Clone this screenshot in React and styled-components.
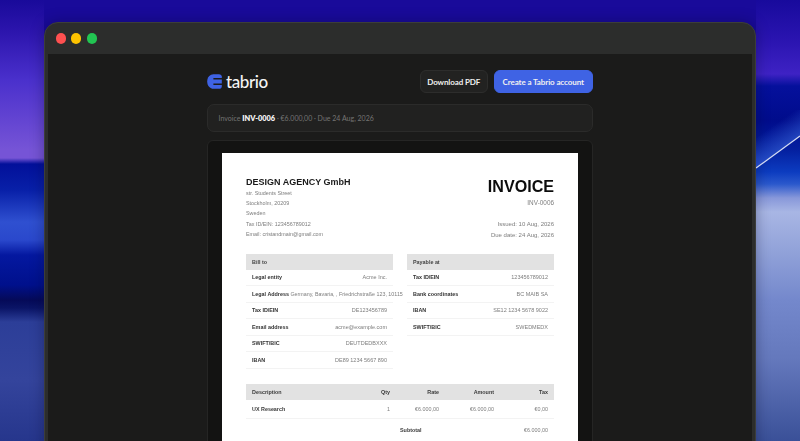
import styled, { createGlobalStyle } from 'styled-components';

const GlobalStyle = createGlobalStyle`
  html, body {
    margin: 0;
    padding: 0;
    background: #1a0a9c;
  }
  * {
    box-sizing: border-box;
  }
`;

/**
 * Wallpaper behind the window. Two strips of stacked colour bands, left and right.
 */
const Page = styled.div`
  position: relative;
  width: 800px;
  height: 441px;
  padding: 22px 44px 0;
  overflow: hidden;
  background:
    linear-gradient(
        180deg,
        #190a9a 0,
        #2b14ac 30px,
        #4a30cc 80px,
        #7654d6 150px,
        #7654d6 158px,
        #02109a 164px,
        #0820a8 190px,
        #2f50d0 222px,
        #2a48cc 240px,
        #0418a0 255px,
        #00108c 285px,
        #050a58 300px,
        #0a1466 308px,
        #2c3e98 322px,
        #34449c 380px,
        #26368c 441px
      )
      left top / 44px 100% no-repeat,
    linear-gradient(
        180deg,
        #180a9c 0,
        #2a14b0 40px,
        #3e22c4 74px,
        #05109c 86px,
        #000c8c 120px,
        #0420a0 150px,
        #0c3cc0 172px,
        #2a58cc 184px,
        #8898da 198px,
        #a8b6e4 212px,
        #98a8dc 240px,
        #7488cc 300px,
        #6478bc 360px,
        #3a5098 441px
      )
      right top / 44px 100% no-repeat,
    #190a9a;
`;

const Streak = styled.svg`
  position: absolute;
  right: 0;
  top: 110px;
`;

const Window = styled.div`
  display: flex;
  flex-direction: column;
  height: 440px;
  background: #2c2d2c;
  border: 1px solid #3c3d3a;
  border-radius: 14px 14px 0 0;
  box-shadow: 0 0 14px rgba(10, 10, 40, 0.35);
`;

const TitleBar = styled.div`
  display: flex;
  align-items: center;
  flex: none;
  gap: 5.3px;
  height: 31px;
  padding-left: 10.5px;
`;

const Dot = styled.span`
  width: 10.3px;
  height: 10.3px;
  border-radius: 50%;
  background: ${({ color }) => color};
`;

const Viewport = styled.div`
  flex: 1;
  margin: 0 3px;
  padding-top: 16px;
  background: #1b1b1a;
  display: flex;
  flex-direction: column;
  align-items: center;
  overflow: hidden;
`;

const Column = styled.div`
  width: 386px;
  flex: none;
`;

const Header = styled.header`
  display: flex;
  align-items: center;
  justify-content: space-between;
  height: 23px;
`;

const Brand = styled.div`
  display: flex;
  align-items: center;
  gap: 4px;
  color: #f4f4f4;
  font-family: 'Lato', sans-serif;
  font-size: 17px;
  font-weight: 500;
  letter-spacing: -0.4px;
  line-height: 1;
`;

const Actions = styled.div`
  display: flex;
  gap: 6px;
  padding-right: 0.5px;
`;

const Button = styled.button`
  height: 23px;
  padding: 0;
  width: ${({ primary }) => (primary ? '98.5px' : '68.5px')};
  border: 1px solid ${({ primary }) => (primary ? '#3f63e4' : '#2d2d2c')};
  border-radius: 6px;
  background: ${({ primary }) => (primary ? '#3f63e4' : '#222221')};
  color: #f0f0f0;
  font-family: 'Lato', sans-serif;
  font-size: 8px;
  font-weight: 700;
  letter-spacing: -0.1px;
`;

const Notice = styled.div`
  display: flex;
  align-items: center;
  height: 28px;
  margin-top: 11px;
  padding-left: 10.5px;
  border: 1px solid #2b2b2a;
  border-radius: 7px;
  background: #212120;
  color: #747473;
  font-family: 'Lato', sans-serif;
  font-size: 7px;
  white-space: pre;
  strong {
    color: #f2f2f2;
    font-size: 7.4px;
    font-weight: 800;
  }
`;

const PaperTray = styled.div`
  margin-top: 8px;
  padding: 12px 14px 0;
  border: 1px solid #252524;
  border-radius: 6px 6px 0 0;
  background: #131312;
  height: 320px;
`;

const Paper = styled.article`
  height: 320px;
  padding: 24px 24px 0;
  background: #fff;
  color: #1a1a1a;
  font-family: 'Liberation Sans', Arial, sans-serif;
  font-size: 5.4px;
`;

const Top = styled.section`
  display: flex;
  justify-content: space-between;
  height: 77px;
  filter: blur(0.25px);
`;

const Company = styled.h2`
  margin: 0;
  font-size: 9px;
  line-height: 11px;
  font-weight: 700;
  color: #1a1a1a;
`;

const Meta = styled.div`
  color: #7d7d7d;
  line-height: 10.2px;
`;

const TitleBlock = styled.div`
  text-align: right;
`;

const Title = styled.h1`
  margin: 0 0 3px;
  font-size: 16.1px;
  line-height: 18px;
  font-weight: 700;
  color: #0c0c0c;
`;

const InvoiceNumber = styled(Meta)`
  font-size: 6.4px;
`;

const Dates = styled(Meta)`
  margin-top: 11px;
  font-size: 6px;
  line-height: 11px;
`;

const Parties = styled.section`
  display: grid;
  grid-template-columns: 147px 147px;
  gap: 14px;
  height: 130px;
  filter: blur(0.25px);
`;

const BandHead = styled.div`
  display: flex;
  align-items: center;
  height: 15.5px;
  padding: 0 6px;
  background: #e2e2e2;
  color: #444;
  font-weight: 700;
`;

const Row = styled.div`
  display: flex;
  align-items: center;
  justify-content: space-between;
  height: 16.5px;
  padding: 0 6px;
  border-bottom: 1px solid #f3f3f3;
  white-space: nowrap;
  b {
    color: #333;
  }
  span {
    color: #7d7d7d;
    font-size: 5.5px;
  }
`;

const LongRow = styled(Row)`
  justify-content: flex-start;
  gap: 1.5px;
  span {
    font-size: 5.35px;
  }
`;

const Items = styled.section`
  filter: blur(0.25px);
`;

const ItemGrid = styled.div`
  display: grid;
  grid-template-columns: 118px 20px 49px 55px 54px;
  align-items: center;
  height: ${({ head }) => (head ? '16px' : '19px')};
  padding: 0 6px;
  background: ${({ head }) => (head ? '#e2e2e2' : 'transparent')};
  border-bottom: ${({ head }) => (head ? 'none' : '1px solid #f3f3f3')};
`;

const Cell = styled.div`
  text-align: ${({ left }) => (left ? 'left' : 'right')};
  font-weight: ${({ bold }) => (bold ? 700 : 400)};
  color: ${({ bold }) => (bold ? '#3a3a3a' : '#7d7d7d')};
`;

const Summary = styled.div`
  display: flex;
  align-items: center;
  justify-content: space-between;
  height: 21px;
  padding: 0 6px 0 154px;
`;

function LogoMark() {
  return (
    <svg width="15" height="15" viewBox="0 0 15 15">
      <path
        fill="#3f63e4"
        d="M6.5 0.2H12C13.6 0.2 14.8 1.2 14.8 2.6V12.4C14.8 13.8 13.6 14.8 12 14.8H6.5C3 14.8 0.2 11.8 0.2 7.5C0.2 3.2 3 0.2 6.5 0.2Z"
      />
      <rect x="6.4" y="4" width="8.6" height="1.5" fill="#1b1b1a" />
      <rect x="6.4" y="9.5" width="8.6" height="1.5" fill="#1b1b1a" />
    </svg>
  );
}

const billTo = [
  ['Tax ID/EIN', 'DE123456789'],
  ['Email address', 'acme@example.com'],
  ['SWIFT/BIC', 'DEUTDEDBXXX'],
  ['IBAN', 'DE89 1234 5667 890'],
];

const payableAt = [
  ['Tax ID/EIN', '123456789012'],
  ['Bank coordinates', 'BC MAIB SA'],
  ['IBAN', 'SE12 1234 5678 9022'],
  ['SWIFT/BIC', 'SWEDMEDX'],
];

export default function App() {
  return (
    <Page>
      <GlobalStyle />
      <Streak width="44" height="62" viewBox="0 0 44 62">
        <defs>
          <linearGradient
            id="streakGlow"
            gradientUnits="userSpaceOnUse"
            x1="8"
            y1="22"
            x2="22"
            y2="42"
          >
            <stop offset="0" stopColor="#2a50c8" stopOpacity="0" />
            <stop offset="1" stopColor="#2a50c8" stopOpacity="0.8" />
          </linearGradient>
        </defs>
        <path d="M0 58L44 26V0H0Z" fill="url(#streakGlow)" />
        <path d="M0 58L44 26" stroke="#d6ddf2" strokeWidth="1.2" fill="none" />
      </Streak>
      <Window>
        <TitleBar>
          <Dot color="#fe5050" />
          <Dot color="#fdc300" />
          <Dot color="#22c552" />
        </TitleBar>
        <Viewport>
          <Column>
            <Header>
              <Brand>
                <LogoMark />
                tabrio
              </Brand>
              <Actions>
                <Button>Download PDF</Button>
                <Button primary>Create a Tabrio account</Button>
              </Actions>
            </Header>
            <Notice>
              Invoice <strong>INV-0006</strong> · €6.000,00 · Due 24 Aug, 2026
            </Notice>
            <PaperTray>
              <Paper>
                <Top>
                  <div>
                    <Company>DESIGN AGENCY GmbH</Company>
                    <Meta>
                      str. Students Street
                      <br />
                      Stockholm, 20209
                      <br />
                      Sweden
                      <br />
                      Tax ID/EIN: 123456789012
                      <br />
                      Email: cristandmain@gmail.com
                    </Meta>
                  </div>
                  <TitleBlock>
                    <Title>INVOICE</Title>
                    <InvoiceNumber>INV-0006</InvoiceNumber>
                    <Dates>
                      Issued: 10 Aug, 2026
                      <br />
                      Due date: 24 Aug, 2026
                    </Dates>
                  </TitleBlock>
                </Top>
                <Parties>
                  <div>
                    <BandHead>Bill to</BandHead>
                    <Row>
                      <b>Legal entity</b>
                      <span>Acme Inc.</span>
                    </Row>
                    <LongRow>
                      <b>Legal Address</b>
                      <span>Germany, Bavaria, , Friedrichstraße 123, 10115</span>
                    </LongRow>
                    {billTo.map(([label, value]) => (
                      <Row key={label}>
                        <b>{label}</b>
                        <span>{value}</span>
                      </Row>
                    ))}
                  </div>
                  <div>
                    <BandHead>Payable at</BandHead>
                    {payableAt.map(([label, value]) => (
                      <Row key={label}>
                        <b>{label}</b>
                        <span>{value}</span>
                      </Row>
                    ))}
                  </div>
                </Parties>
                <Items>
                  <ItemGrid head>
                    <Cell left bold>Description</Cell>
                    <Cell bold>Qty</Cell>
                    <Cell bold>Rate</Cell>
                    <Cell bold>Amount</Cell>
                    <Cell bold>Tax</Cell>
                  </ItemGrid>
                  <ItemGrid>
                    <Cell left bold>UX Research</Cell>
                    <Cell>1</Cell>
                    <Cell>€6.000,00</Cell>
                    <Cell>€6.000,00</Cell>
                    <Cell>€0,00</Cell>
                  </ItemGrid>
                  <Summary>
                    <Cell bold>Subtotal</Cell>
                    <Cell>€6.000,00</Cell>
                  </Summary>
                </Items>
              </Paper>
            </PaperTray>
          </Column>
        </Viewport>
      </Window>
    </Page>
  );
}
